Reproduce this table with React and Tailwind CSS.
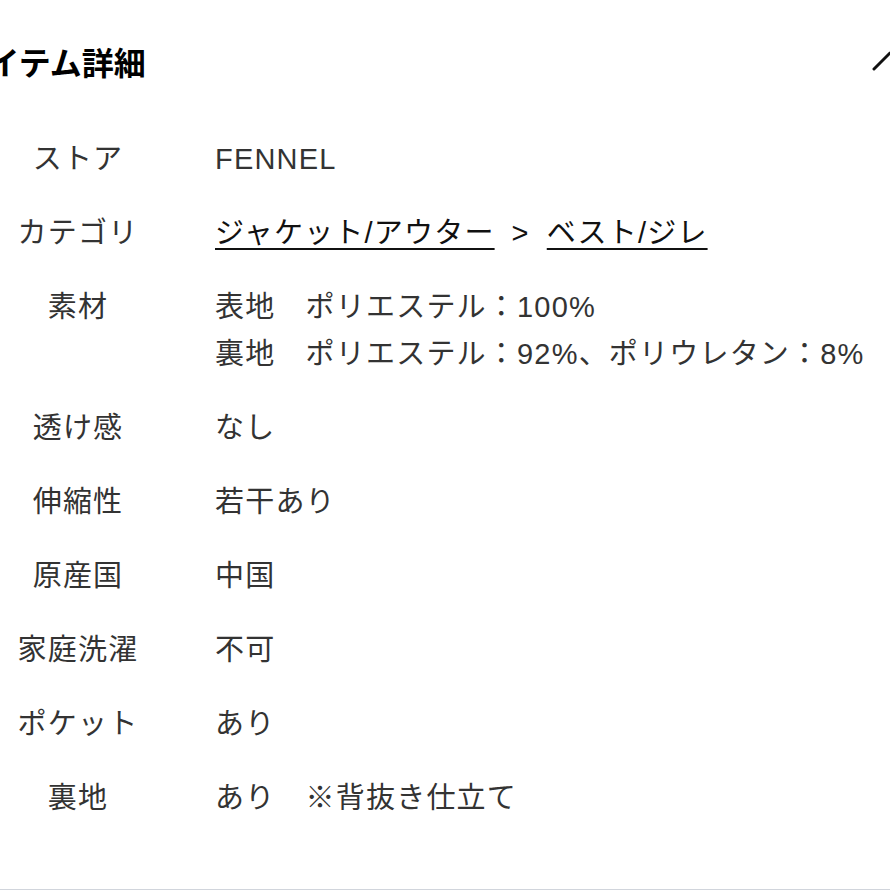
import React from "react";

const rows = [
  { label: "ストア", value: ["FENNEL"] },
  { label: "カテゴリ", category: true },
  {
    label: "素材",
    value: [
      "表地　ポリエステル：100%",
      "裏地　ポリエステル：92%、ポリウレタン：8%",
    ],
  },
  { label: "透け感", value: ["なし"] },
  { label: "伸縮性", value: ["若干あり"] },
  { label: "原産国", value: ["中国"] },
  { label: "家庭洗濯", value: ["不可"] },
  { label: "ポケット", value: ["あり"] },
  { label: "裏地", value: ["あり　※背抜き仕立て"] },
];

const Category = () => (
  <div className="flex items-center text-[#111]">
    <span className="underline decoration-2 underline-offset-[5px]">ジャケット/アウター</span>
    <span className="mx-[17px]">&gt;</span>
    <span className="underline decoration-2 underline-offset-[5px]">ベスト/ジレ</span>
  </div>
);

export default function App() {
  return (
    <div
      className="w-[890px] h-[890px] overflow-hidden bg-white border-b border-gray-300"
      style={{ fontFamily: '"Liberation Sans", "Noto Sans CJK JP", sans-serif' }}
    >
      {/* Header */}
      <div className="flex items-center justify-between h-[124px] pb-[2px]">
        <h2
          className="ml-[-43px] text-[32px] font-bold text-black leading-none"
          style={{ fontFamily: '"Noto Sans CJK JP", sans-serif' }}
        >
          アイテム詳細
        </h2>
        <svg className="mr-[-18px]" width="36" height="20" viewBox="0 0 36 20" fill="none" stroke="#111" strokeWidth="3" strokeLinecap="round" strokeLinejoin="round">
          <path d="M2 18 L18 2 L34 18" />
        </svg>
      </div>

      {/* Details */}
      <div className="grid grid-cols-[156px_1fr] gap-x-[59px] gap-y-[27px] text-[29px] leading-[47px] tracking-[1.2px] text-[#333] pt-[12px]">
        {rows.map((r) => (
          <React.Fragment key={r.label}>
            <div className="text-center">{r.label}</div>
            <div>
              {r.category ? (
                <Category />
              ) : (
                r.value.map((v) => <div key={v}>{v}</div>)
              )}
            </div>
          </React.Fragment>
        ))}
      </div>
    </div>
  );
}
